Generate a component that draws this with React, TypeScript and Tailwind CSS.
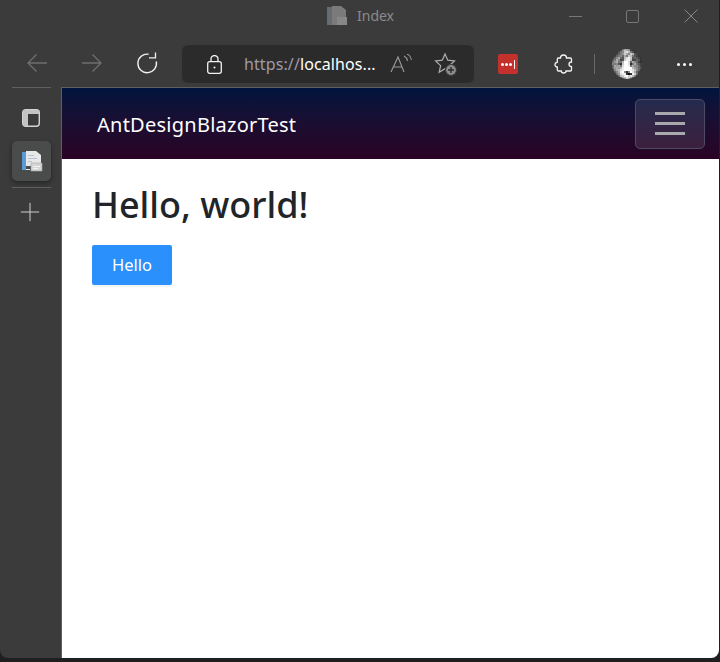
import { Plus } from 'lucide-react';

const FONT = "font-['Noto_Sans','Open_Sans',sans-serif]";

// rough 15x15 greyscale of the profile picture, one hex digit per cell
const AVATAR = [
  '333349ba9433333',
  '333578cdb753333',
  '334679ca8ca5433',
  '346786a7cb75433',
  '468a65bdec56543',
  '67a845ceeb44653',
  '79a77bffd6a8643',
  '87853cffd37a754',
  '6a9a7dffe7a8864',
  '79a9beffffb9865',
  '58abdefffedb864',
  '468aef838fda643',
  '3579dee313ec743',
  '3357bcefcdb8533',
  '33346abdca64333',
];

function Avatar() {
  return (
    <svg width="30" height="30" viewBox="0 0 30 30" shapeRendering="crispEdges">
      <clipPath id="avatar">
        <circle cx="15" cy="15" r="15" />
      </clipPath>
      <g clipPath="url(#avatar)">
        {AVATAR.map((row, y) =>
          row.split('').map((c, x) => (
            <rect key={`${x}-${y}`} x={x * 2} y={y * 2} width="2" height="2" fill={`#${c}${c}${c}`} />
          )),
        )}
      </g>
    </svg>
  );
}

function PagesIcon({ size = 22 }: { size?: number }) {
  return (
    <svg width={size} height={size} viewBox="0 0 22 22">
      <path d="M1 2h4v18H1z" fill="#5b9bd5" />
      <path d="M5 1h10l5 4v11H5z" fill="#e8e8e8" />
      <path d="M7 5h6v1H7zM7 8h9v1H7zM7 11h4v1H7z" fill="#b5c4d4" />
      <path d="M5 20h4v-1H5z" fill="#e8e8e8" />
      <path d="M10 13h11v8H10z" fill="#d4d4d4" stroke="#a5a5a5" strokeWidth="0.6" />
      <path d="M12 16h7v1h-7zM12 18h5v1h-5z" fill="#f4f4f4" />
    </svg>
  );
}

function TitleBar() {
  return (
    <div className="flex h-[32px] items-center">
      <div className="flex flex-1 items-center gap-[10px] pl-[327px]">
        <svg width="20" height="20" viewBox="0 0 20 20">
          <path d="M0 1h5v18H0z" fill="#666c72" />
          <path d="M5 0h9l5 4v15H5z" fill="#7a7a7a" />
          <path d="M10 11h10v8H10z" fill="#878787" />
        </svg>
        <span className="text-[14px] leading-none text-[#8b8b8b]">Index</span>
      </div>
      <div className="mr-[5px] flex items-center">
        <div className="flex h-[32px] w-[46px] items-center justify-center">
          <div className="h-px w-[13px] bg-[#777]" />
        </div>
        <div className="ml-[11px] flex h-[32px] w-[46px] items-center justify-center">
          <div className="h-[13px] w-[13px] rounded-[2px] border border-[#777]" />
        </div>
        <div className="ml-[13px] flex h-[32px] w-[46px] items-center justify-center">
          <svg width="14" height="14" viewBox="0 0 14 14" fill="none" stroke="#888" strokeWidth="1">
            <path d="M.5.5l13 13M13.500.5l-13 13" />
          </svg>
        </div>
      </div>
    </div>
  );
}

function ToolBar() {
  return (
    <div className="flex h-[55px] items-start pt-[13px] pl-[26px]">
      <div className="flex h-[36px] w-[34px] items-center">
        <svg width="22" height="22" viewBox="0 0 22 22" fill="none" stroke="#6f6f6f" strokeWidth="1.3">
          <path d="M21 11H2M10.500 2.500L2 11l8.500 8.500" />
        </svg>
      </div>
      <div className="ml-[21px] flex h-[36px] w-[34px] items-center">
        <svg width="22" height="22" viewBox="0 0 22 22" fill="none" stroke="#6f6f6f" strokeWidth="1.3">
          <path d="M1 11h19M11.500 2.500L20 11l-8.500 8.500" />
        </svg>
      </div>
      <div className="ml-[21px] flex h-[36px] w-[22px] items-center">
        <svg width="22" height="22" viewBox="0 0 22 22" fill="none" stroke="#f0f0f0" strokeWidth="1.4">
          <path d="M12.500 2.200A9.300 9.300 0 1 0 20.300 9.500" />
          <path d="M13 5.800h6.500V0.500" strokeWidth="1.300" />
        </svg>
      </div>
      <div className="ml-[24px] flex h-[38px] w-[292px] items-center rounded-[6px] bg-[#2b2b2b] pl-[25px]">
        <svg width="15" height="19" viewBox="0 0 15 19" fill="none" stroke="#f2f2f2" strokeWidth="1.3">
          <rect x="0.700" y="6.700" width="13.600" height="11.600" rx="2" />
          <path d="M4 6.500V4a3.500 3.500 0 0 1 7 0v2.500" />
          <circle cx="7.500" cy="12.500" r="1" fill="#f2f2f2" stroke="none" />
        </svg>
        <span className="ml-[22px] text-[16px] leading-none tracking-[0.1px] whitespace-nowrap text-[#a09aa6]">
          https://<span className="text-white">localhos...</span>
        </span>
        <svg className="ml-[14px]" width="24" height="20" viewBox="0 0 24 20" fill="none" stroke="#9a9a9a" strokeWidth="1.100">
          <path d="M1 18L8 3l6 15M3.500 13h8" />
          <path d="M14 2c2 1 3 2 3.500 5M17 0c2.500 1 4 3 4.500 6" />
        </svg>
        <svg className="ml-[20px]" width="24" height="24" viewBox="0 0 24 24" fill="none" stroke="#b0b0b0" strokeWidth="1.200">
          <path d="M11 2l2.800 6.200 6.700.7-5 4.600 1.300 6.500L11 16.800 5.200 20.200l1.400-6.600-5-4.700 6.700-.7z" />
          <circle cx="17" cy="18" r="5.500" fill="#8d8d8d" stroke="#3b3b3b" />
          <path d="M17 15v6M14 18h6" stroke="#2b2b2b" strokeWidth="1.400" />
        </svg>
      </div>
      <div className="ml-[24px] flex h-[38px] w-[20px] items-center">
        <div className="flex h-[20px] w-[20px] items-center justify-center gap-[1px] rounded-[2px] bg-[#c4302b]">
          <div className="h-[3px] w-[3px] rounded-full bg-white" />
          <div className="h-[3px] w-[3px] rounded-full bg-white" />
          <div className="h-[3px] w-[3px] rounded-full bg-white" />
          <div className="ml-[1px] h-[9px] w-px bg-white" />
        </div>
      </div>
      <div className="ml-[36px] flex h-[38px] w-[20px] items-center">
        <svg width="20" height="20" viewBox="0 0 20 20" fill="none" stroke="#f2f2f2" strokeWidth="1.300">
          <path d="M9.500 1c2 0 3 1.300 3 3h3.800c.8 0 1.200.5 1.200 1.200V8c-1.800 0-2.500 1-2.500 2.300s.8 2.300 2.500 2.300v3.200c0 .8-.5 1.200-1.200 1.200H12c0 1.200-1 2-2.300 2S7.300 18.200 7.300 17H4.500c-.7 0-1.200-.5-1.200-1.200v-2.800C1.800 13 1 12 1 10.700S1.800 8.300 3.300 8.300V5.200C3.300 4.500 3.800 4 4.500 4h2c0-1.700 1-3 3-3z" />
        </svg>
      </div>
      <div className="ml-[20px] flex h-[38px] items-center">
        <div className="h-[20px] w-px bg-[#6a6a6a]" />
      </div>
      <div className="ml-[17px] flex h-[38px] items-center">
        <Avatar />
      </div>
      <div className="ml-[35px] flex h-[38px] items-center gap-[3px]">
        <div className="h-[3px] w-[3px] rounded-full bg-white" />
        <div className="h-[3px] w-[3px] rounded-full bg-white" />
        <div className="h-[3px] w-[3px] rounded-full bg-white" />
      </div>
    </div>
  );
}

function SideRail() {
  return (
    <div className="flex w-[61px] shrink-0 flex-col items-center pl-[2px]">
      <div className="h-px w-[39px] bg-[#5f5f5f]" />
      <div className="-ml-[2px] flex h-[53px] items-center pt-[6px]">
        <svg width="18" height="18" viewBox="0 0 18 18" fill="none">
          <rect x="0.700" y="0.700" width="16.600" height="16.600" rx="3" stroke="#d4d4d4" strokeWidth="1.400" />
          <path d="M1 5h16V3a2 2 0 0 0-2-2H3a2 2 0 0 0-2 2zM1 5h5v12H3a2 2 0 0 1-2-2z" fill="#c4c4c4" />
        </svg>
      </div>
      <div className="flex h-[40px] w-[39px] items-center justify-center rounded-[5px] bg-[#4a4c4b] shadow-[0_2px_5px_rgba(0,0,0,0.4)]">
        <PagesIcon />
      </div>
      <div className="mt-[6px] h-px w-[39px] bg-[#5f5f5f]" />
      <div className="-ml-[3px] flex h-[48px] items-center">
        <Plus size={30} strokeWidth={0.8} color="#cfcfcf" />
      </div>
    </div>
  );
}

export default function App() {
  return (
    <div className={`h-[662px] w-[720px] overflow-hidden bg-[#1f1f1f] ${FONT}`}>
      <div className="flex h-[658px] w-[719px] flex-col overflow-hidden rounded-b-[8px] bg-[#3b3b3b]">
        <TitleBar />
        <ToolBar />
        <div className="flex min-h-0 flex-1">
          <SideRail />
          <div className="flex min-w-0 flex-1 flex-col border-t border-l border-t-[#5f5f5f] border-l-[#5f5f5f] bg-white">
            <div className="flex h-[71px] items-center justify-between bg-gradient-to-b from-[#00143e] to-[#2a0225] pr-[14px] pl-[35px]">
              <span className="pt-[2px] text-[20px] tracking-[0.25px] whitespace-nowrap text-white">AntDesignBlazorTest</span>
              <div className="flex h-[50px] w-[70px] flex-col items-center justify-center gap-[7.500px] rounded-[5px] border border-[#4d4a63] bg-[#ffffff1a]">
                <div className="h-[2.500px] w-[30px] bg-[#a8a8ad]" />
                <div className="h-[2.500px] w-[30px] bg-[#a8a8ad]" />
                <div className="h-[2.500px] w-[30px] bg-[#a8a8ad]" />
              </div>
            </div>
            <div className="flex flex-col items-start pl-[30px]">
              <h1 className="mt-[21px] text-[36px] leading-[50px] font-medium whitespace-nowrap text-[#212529]">Hello, world!</h1>
              <button className="mt-[15px] h-[40px] w-[80px] rounded-[2px] bg-[#2a90fb] text-[16.500px] text-white shadow-[0_2px_0_rgba(0,0,0,0.045)]">Hello</button>
            </div>
          </div>
        </div>
      </div>
    </div>
  );
}
